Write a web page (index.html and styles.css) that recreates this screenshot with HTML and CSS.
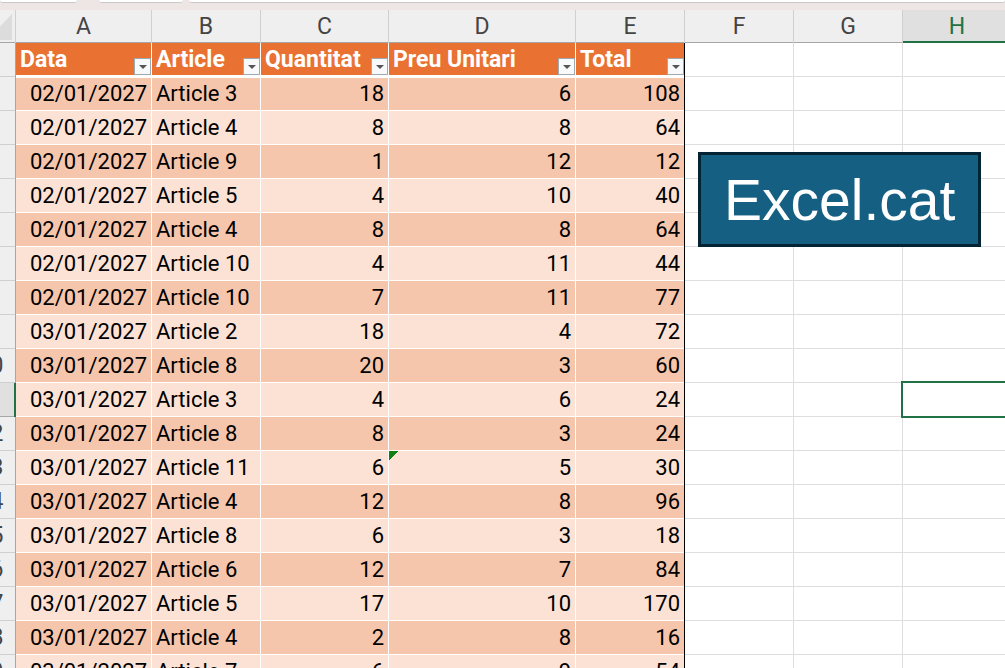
FILE: index.html
```html
<!DOCTYPE html>
<html lang="ca">
<head>
  <meta charset="UTF-8">
  <meta name="viewport" content="width=device-width, initial-scale=1.0">
  <title>Excel.cat</title>
  <link rel="stylesheet" href="styles.css">
</head>
<body>

<div class="barra">
  <div class="quadre quadre-nom"></div>
  <div class="quadre quadre-fx"></div>
  <div class="quadre quadre-formula"></div>
</div>

<div class="full">
  <table class="graella">
    <colgroup>
      <col class="col-num">
      <col class="col-a">
      <col class="col-b">
      <col class="col-c">
      <col class="col-d">
      <col class="col-e">
      <col class="col-f">
      <col class="col-g">
      <col>
    </colgroup>
    <thead>
      <tr class="lletres">
        <th class="cantonada"><svg width="25" height="26" viewBox="0 0 25 26"><path d="M25 0V26H0Z" fill="#dcdcdc"/></svg></th>
        <th>A</th>
        <th>B</th>
        <th>C</th>
        <th>D</th>
        <th>E</th>
        <th>F</th>
        <th>G</th>
        <th class="activa">H</th>
      </tr>
    </thead>
    <tbody id="cos"></tbody>
  </table>

  <div class="rotul">Excel.cat</div>
</div>

<script>
const titols = ['Data', 'Article', 'Quantitat', 'Preu Unitari', 'Total'];

// data, article, quantitat, preu
const vendes = [
  ['02/01/2027', 3, 18, 6],
  ['02/01/2027', 4, 8, 8],
  ['02/01/2027', 9, 1, 12],
  ['02/01/2027', 5, 4, 10],
  ['02/01/2027', 4, 8, 8],
  ['02/01/2027', 10, 4, 11],
  ['02/01/2027', 10, 7, 11],
  ['03/01/2027', 2, 18, 4],
  ['03/01/2027', 8, 20, 3],
  ['03/01/2027', 3, 4, 6],
  ['03/01/2027', 8, 8, 3],
  ['03/01/2027', 11, 6, 5],
  ['03/01/2027', 4, 12, 8],
  ['03/01/2027', 8, 6, 3],
  ['03/01/2027', 6, 12, 7],
  ['03/01/2027', 5, 17, 10],
  ['03/01/2027', 4, 2, 8],
  ['03/01/2027', 7, 6, 9]
];

const filaActiva = 11;
const filaAvis = 13;
const cos = document.getElementById('cos');

// Fila de títols amb els botons de filtre
const capcalera = document.createElement('tr');
capcalera.className = 'titols';
capcalera.innerHTML = '<th class="num">1</th>' + titols.map(t => `
  <th class="camp"><div class="camp-dins"><span>${t}</span>
    <button class="filtre" aria-label="Filtra ${t}"><svg width="8" height="4" viewBox="0 0 8 4"><path d="M0 0H8L4 4Z" fill="#555"/></svg></button>
  </div></th>`).join('') + '<td></td><td></td><td></td>';
cos.appendChild(capcalera);

// Files de dades
vendes.forEach(([data, article, quantitat, preu], i) => {
  const n = i + 2;
  const tr = document.createElement('tr');
  tr.className = i % 2 ? 'clara' : 'fosca';
  tr.innerHTML = `
    <th class="num${n === filaActiva ? ' activa' : ''}">${n}</th>
    <td class="dada dreta">${data}</td>
    <td class="dada">Article ${article}</td>
    <td class="dada dreta">${quantitat}</td>
    <td class="dada dreta${n === filaAvis ? ' avis' : ''}">${preu}</td>
    <td class="dada dreta">${quantitat * preu}</td>
    <td></td><td></td><td${n === filaActiva ? ' class="seleccio"' : ''}></td>`;
  cos.appendChild(tr);
});
</script>

</body>
</html>
```
FILE: styles.css
```css
* {
    box-sizing: border-box;
}

body {
    margin: 0;
    height: 100vh;
    display: flex;
    flex-direction: column;
    overflow: hidden;
    font-family: Roboto, "Noto Sans", sans-serif;
    font-size: 23px;
    color: #000;
    background-color: #fff;
}

/* Vora inferior de la barra de fórmules */
.barra {
    display: flex;
    gap: 22px;
    height: 10px;
    flex: none;
    background-color: #eee6e4;
}

.quadre {
    height: 3px;
    background-color: #fff;
    border-bottom: 1px solid #c8c8c8;
    border-radius: 0 0 3px 3px;
}

.quadre-nom {
    width: 77px;
}

.quadre-fx {
    width: 84px;
}

.quadre-formula {
    flex: 1;
    margin-left: -16px;
}

.full {
    position: relative;
    flex: 1;
    overflow: hidden;
}

/* La graella està desplaçada: només es veu el final dels números de fila,
   i la columna H continua més enllà de la finestra */
.graella {
    width: calc(100% + 41px);
    margin-left: -34px;
    table-layout: fixed;
    border-collapse: separate;
    border-spacing: 0;
}

.col-num { width: 50px; }
.col-a { width: 136px; }
.col-b { width: 109px; }
.col-c { width: 128px; }
.col-d { width: 187px; }
.col-e { width: 109px; }
.col-f { width: 109px; }
.col-g { width: 109px; }

.graella th,
.graella td {
    height: 34px;
    padding: 0 4px;
    line-height: 34px;
    white-space: nowrap;
    border-right: 1px solid #dedede;
    box-shadow: inset 0 -1px #dedede;
}

.graella .lletres th {
    height: 33px;
    padding: 1px 0 0;
    line-height: 32px;
    font-weight: normal;
    color: #444;
    background-color: #efefef;
    border-right-color: #d0d0d0;
    box-shadow: inset 0 -1px #a6a6a6;
}

.graella .lletres .activa {
    color: #217346;
    background-color: #e0e0e0;
    box-shadow: inset 0 -2px #217346;
}

.graella .lletres .cantonada {
    padding: 0 3px 0 0;
}

.cantonada svg {
    display: block;
    margin-left: auto;
}

.graella .num {
    padding: 0;
    font-weight: normal;
    color: #444;
    background-color: #efefef;
    border-right-color: #a6a6a6;
    box-shadow: inset 0 -1px #d0d0d0;
}

.graella .num.activa {
    color: #217346;
    background-color: #e0e0e0;
    border-right: 2px solid #217346;
    box-shadow: inset 0 -1px #a6a6a6;
}

/* Taula de dades */
.graella .camp {
    padding: 0;
    text-align: left;
    color: #fff;
    background-color: #e97132;
    border-right-color: #fff;
    box-shadow: inset 0 -2px #fff;
}

.camp-dins {
    display: flex;
    justify-content: space-between;
    height: 34px;
    padding-left: 4px;
}

.filtre {
    display: flex;
    align-items: center;
    justify-content: center;
    align-self: flex-end;
    flex: none;
    width: 17px;
    height: 17px;
    margin-bottom: 2px;
    padding: 0;
    border: 1px solid #a0a8b0;
    background-color: #f7f9fb;
    cursor: pointer;
}

.filtre:hover {
    background-color: #dde6ee;
}

.graella .dada {
    font-size: 22px;
    border-right-color: #fff;
    box-shadow: inset 0 -1px #fff;
}

.fosca .dada {
    background-color: #f6c6ac;
}

.clara .dada {
    background-color: #fbe2d5;
}

.graella .titols + tr .dada {
    box-shadow: inset 0 -1px #fff, inset 0 1px #fff;
}

.graella .camp:nth-child(6),
.graella .dada:nth-child(6) {
    border-right-color: #000;
}

.dreta {
    text-align: right;
}

/* Triangle verd d'avís */
.avis {
    background-image: linear-gradient(135deg, #108010 7px, transparent 7px);
}

.seleccio {
    position: relative;
}

.seleccio::after {
    content: "";
    position: absolute;
    inset: -2px -2px -1px -2px;
    border: 2px solid #217346;
}

.rotul {
    position: absolute;
    top: 142px;
    left: 698px;
    padding: 13px 23px 11px;
    font-family: "Liberation Sans", Arial, sans-serif;
    font-size: 57px;
    line-height: 65px;
    color: #fff;
    background-color: #156082;
    border: 3px solid #042433;
}
```
